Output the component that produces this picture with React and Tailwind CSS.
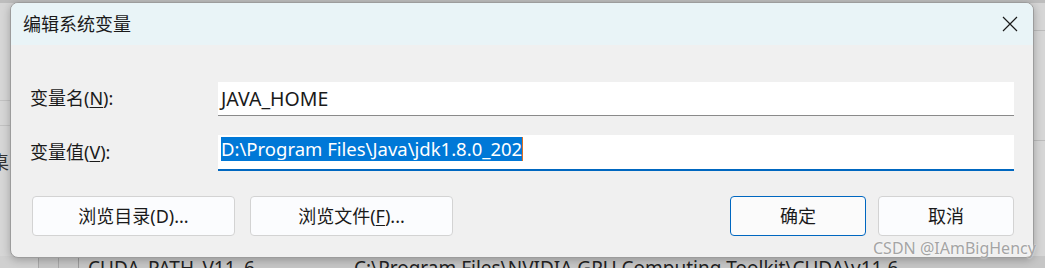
import React from 'react';

const font = "font-['Noto_Sans','Noto_Sans_CJK_SC',sans-serif]";

const Label = ({ text, mnemonic }) => (
  <span className="text-[18px] text-[#1a1a1a] leading-none">
    {text}(<span className="underline underline-offset-2">{mnemonic}</span>):
  </span>
);

const Button = ({ children, primary, className = '' }) => (
  <button
    className={`h-10 rounded-[4px] border text-[18px] text-[#1a1a1a] ${
      primary ? 'border-[#0067c0] bg-[#fbfbfb]' : 'border-[#d3d3d3] bg-[#fbfcfe]'
    } ${className}`}
  >
    {children}
  </button>
);

export default function App() {
  return (
    <div className={`relative w-[1045px] h-[268px] overflow-hidden bg-[#d6d6d6] ${font}`}>
      {/* dimmed window behind */}
      <div className="absolute left-0 top-0 w-full h-[3px] bg-[#bdbdbd]" />
      <div className="absolute left-0 top-[100px] w-[10px] h-px bg-[#c2c2c2]" />
      <div className="absolute left-0 top-[125px] w-[10px] h-px bg-[#c2c2c2]" />
      <span className="absolute left-[-9px] top-[149px] text-[18px] text-[#333]">桌</span>
      <div className="absolute left-0 bottom-0 w-full h-[12px] bg-[#c6c6c6] flex items-start">
        <div className="w-[38px] h-full bg-[#d0d0d0]" />
        <div className="w-px h-full bg-[#a8a8a8]" />
        <div className="w-[19px]" />
        <div className="w-px h-full bg-[#a8a8a8]" />
        <div className="w-[19px]" />
        <div className="w-px h-full bg-[#9a9a9a]" />
        <span className="ml-[9px] mt-[3px] text-[19px] leading-[18px] text-[#222] w-[266px] whitespace-nowrap">CUDA_PATH_V11_6</span>
        <span className="mt-[3px] text-[19px] leading-[18px] text-[#222] whitespace-nowrap">C:\Program Files\NVIDIA GPU Computing Toolkit\CUDA\v11.6</span>
      </div>
      <div className="absolute right-0 top-[30px] w-[12px] h-px bg-[#bcbcbc]" />
      <div className="absolute right-0 top-[140px] w-[12px] h-px bg-[#bcbcbc]" />

      {/* dialog */}
      <div className="absolute left-[10px] top-[2px] w-[1024px] h-[256px] rounded-[8px] border border-[#9c9c9c] bg-[#f0f0f0] shadow-[0_2px_8px_rgba(0,0,0,0.25)] overflow-hidden flex flex-col">
        <div className="h-[42px] bg-[#e9f4f7] flex items-center justify-between pl-[12px] pr-[15px]">
          <span className="text-[18px] text-[#1a1a1a] leading-none">编辑系统变量</span>
          <svg width="16" height="16" viewBox="0 0 16 16" className="text-[#1a1a1a]">
            <path d="M1 1 L15 15 M15 1 L1 15" stroke="currentColor" strokeWidth="1.2" fill="none" />
          </svg>
        </div>

        <div className="flex flex-col pt-[37px] pl-[19px] pr-[19px]">
          <div className="flex items-center">
            <div className="w-[188px]">
              <Label text="变量名" mnemonic="N" />
            </div>
            <div className="flex-1 h-[34px] bg-white border-b border-[#8a8a8a] flex items-center pl-[3px]">
              <span className="text-[19.5px] text-[#1a1a1a] leading-none">JAVA_HOME</span>
            </div>
          </div>

          <div className="flex items-center mt-[19px]">
            <div className="w-[188px]">
              <Label text="变量值" mnemonic="V" />
            </div>
            <div className="flex-1 h-[36px] bg-white border-b-2 border-[#0067c0] flex items-start pl-[3px] pt-[2px]">
              <span className="h-[24px] bg-[#0078d7] text-white text-[18.5px] leading-[24px] whitespace-nowrap border-r border-[#e07020]">
                D:\Program Files\Java\jdk1.8.0_202
              </span>
            </div>
          </div>

          <div className="flex items-center mt-[25px] pl-[2px]">
            <Button className="w-[203px]">浏览目录(D)...</Button>
            <Button className="w-[203px] ml-[15px]">
              浏览文件(<span className="underline underline-offset-2">F</span>)...
            </Button>
            <div className="flex-1" />
            <Button primary className="w-[136px]">确定</Button>
            <Button className="w-[136px] ml-[12px]">取消</Button>
          </div>
        </div>
      </div>

      <span className="absolute left-[873px] top-[240px] text-[16px] leading-none whitespace-nowrap text-[#a4a4a4] [text-shadow:0_0_2px_#fff]">
        CSDN @IAmBigHency
      </span>
    </div>
  );
}
